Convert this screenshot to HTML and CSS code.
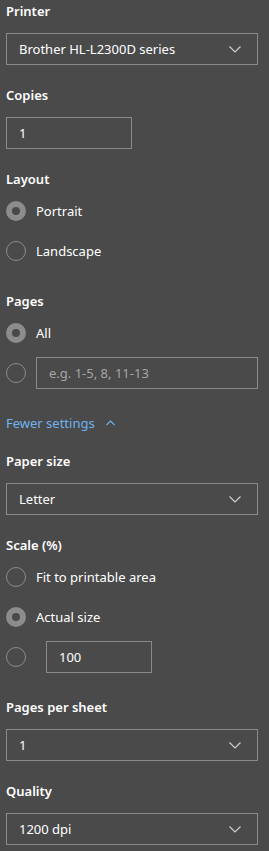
FILE: index.html
```
<!DOCTYPE html>
<html lang="en">
<head>
  <meta charset="UTF-8" />
  <meta name="viewport" content="width=device-width, initial-scale=1.0"/>
  <title>Print settings</title>
  <link rel="stylesheet" href="styles.css">
</head>
<body>
  <div class="settings">
    <section class="field">
      <div class="label">Printer</div>
      <div class="select">
        <span>Brother HL-L2300D series</span>
        <svg class="chev" width="12" height="7" viewBox="0 0 12 7"><polyline points="0.5,0.5 6,6 11.5,0.5" fill="none" stroke="#cfcfcf" stroke-width="1.2"/></svg>
      </div>
    </section>

    <section class="field">
      <div class="label">Copies</div>
      <div class="input copies">1</div>
    </section>

    <section class="field">
      <div class="label">Layout</div>
      <div class="options">
        <div class="option"><span class="radio checked"></span><span>Portrait</span></div>
        <div class="option"><span class="radio"></span><span>Landscape</span></div>
      </div>
    </section>

    <section class="field">
      <div class="label">Pages</div>
      <div class="options">
        <div class="option"><span class="radio checked"></span><span>All</span></div>
        <div class="option"><span class="radio"></span><div class="input range placeholder">e.g. 1-5, 8, 11-13</div></div>
      </div>
    </section>

    <div class="toggle">
      <span>Fewer settings</span>
      <svg width="9" height="6" viewBox="0 0 9 6"><polyline points="0.5,5 4.5,1 8.5,5" fill="none" stroke="#6eb3ef" stroke-width="1.1"/></svg>
    </div>

    <section class="field">
      <div class="label">Paper size</div>
      <div class="select">
        <span>Letter</span>
        <svg class="chev" width="12" height="7" viewBox="0 0 12 7"><polyline points="0.5,0.5 6,6 11.5,0.5" fill="none" stroke="#cfcfcf" stroke-width="1.2"/></svg>
      </div>
    </section>

    <section class="field">
      <div class="label">Scale (%)</div>
      <div class="options">
        <div class="option"><span class="radio"></span><span>Fit to printable area</span></div>
        <div class="option"><span class="radio checked"></span><span>Actual size</span></div>
        <div class="option"><span class="radio"></span><div class="input scale">100</div></div>
      </div>
    </section>

    <section class="field">
      <div class="label">Pages per sheet</div>
      <div class="select">
        <span>1</span>
        <svg class="chev" width="12" height="7" viewBox="0 0 12 7"><polyline points="0.5,0.5 6,6 11.5,0.5" fill="none" stroke="#cfcfcf" stroke-width="1.2"/></svg>
      </div>
    </section>

    <section class="field">
      <div class="label">Quality</div>
      <div class="select">
        <span>1200 dpi</span>
        <svg class="chev" width="12" height="7" viewBox="0 0 12 7"><polyline points="0.5,0.5 6,6 11.5,0.5" fill="none" stroke="#cfcfcf" stroke-width="1.2"/></svg>
      </div>
    </section>
  </div>
</body>
</html>
```

FILE: styles.css
```
html, body {
  background-color: #4a4a4a;
}
body {
  margin: 0;
  padding: 1px 11px 0 6px;
  color: #ffffff;
  font-family: "Noto Sans", "Open Sans", sans-serif;
  font-size: 13px;
}
.settings {
  display: flex;
  flex-direction: column;
}
.field {
  margin-bottom: 20px;
}
.label {
  height: 20px;
  line-height: 20px;
  font-weight: 600;
  font-size: 13px;
  margin-bottom: 12px;
}
.options .option:first-child {
  margin-top: -10px;
}
.select {
  box-sizing: border-box;
  height: 32px;
  border: 1px solid #8a8a8a;
  display: flex;
  align-items: center;
  justify-content: space-between;
  padding: 0 16px 0 12px;
}
.chev {
  display: block;
}
.input {
  box-sizing: border-box;
  height: 32px;
  border: 1px solid #8a8a8a;
  display: flex;
  align-items: center;
  padding: 0 12px;
}
.copies {
  width: 126px;
}
.range {
  flex: 1;
}
.placeholder {
  color: #a6a6a6;
}
.scale {
  width: 106px;
  margin-left: 10px;
}
.option {
  height: 40px;
  display: flex;
  align-items: center;
  gap: 10px;
}
.radio {
  box-sizing: border-box;
  width: 20px;
  height: 20px;
  border-radius: 50%;
  border: 1px solid #8c8c8c;
  flex-shrink: 0;
}
.radio.checked {
  border: 6px solid #8c8c8c;
}
.toggle {
  margin: 0 0 18px;
  height: 20px;
  display: flex;
  align-items: center;
  gap: 11px;
  color: #6eb3ef;
}
```
